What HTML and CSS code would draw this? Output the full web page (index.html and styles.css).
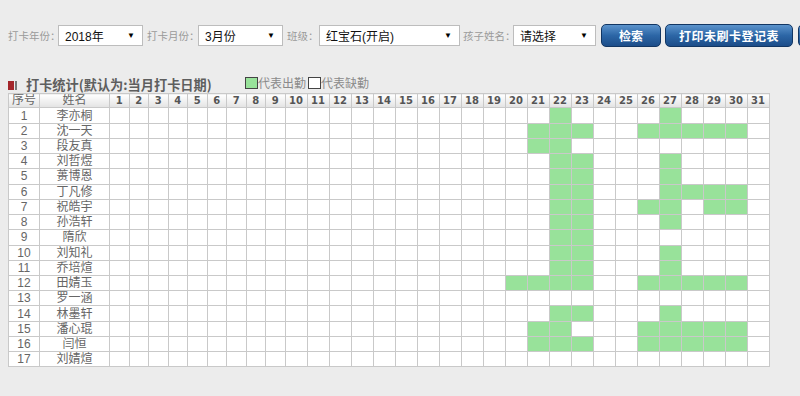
FILE: index.html
```html
<!DOCTYPE html>
<html lang="zh-CN">
<head>
<meta charset="utf-8">
<title>打卡统计</title>
<link rel="stylesheet" href="styles.css">
</head>
<body>
<div class="page">
  <div class="toolbar">
    <span class="label l1">打卡年份：</span>
    <div class="select s1"><span>2018年</span><i>▼</i></div>
    <span class="label l2">打卡月份：</span>
    <div class="select s2"><span>3月份</span><i>▼</i></div>
    <span class="label l3">班级：</span>
    <div class="select s3"><span>红宝石(开启)</span><i>▼</i></div>
    <span class="label l4">孩子姓名：</span>
    <div class="select s4"><span>请选择</span><i>▼</i></div>
    <button class="btn b1">检索</button>
    <button class="btn b2">打印未刷卡登记表</button>
    <button class="btn b3" aria-label="导出"></button>
  </div>

  <div class="title-bar">
    <span class="mark"><i class="red"></i><i class="gray"></i></span>
    <h2 class="title">打卡统计(默认为:当月打卡日期)</h2>
    <span class="legend"><i class="box on"></i><span class="lt">代表出勤</span><i class="box"></i><span class="lt">代表缺勤</span></span>
  </div>

  <table class="grid">
    <colgroup>
      <col class="c-no"><col class="c-name">
      <col class="c-s"><col class="c-s"><col class="c-s"><col class="c-s"><col class="c-s"><col class="c-s"><col class="c-s"><col class="c-s"><col class="c-s">
      <col class="c-w"><col class="c-w"><col class="c-w"><col class="c-w"><col class="c-w"><col class="c-w"><col class="c-w"><col class="c-w"><col class="c-w"><col class="c-w"><col class="c-w"><col class="c-w"><col class="c-w"><col class="c-w"><col class="c-w"><col class="c-w"><col class="c-w"><col class="c-w"><col class="c-w"><col class="c-w"><col class="c-w"><col class="c-w">
    </colgroup>
    <thead>
      <tr>
        <th>序号</th><th>姓名</th>
        <th class="d">1</th><th class="d">2</th><th class="d">3</th><th class="d">4</th><th class="d">5</th><th class="d">6</th><th class="d">7</th><th class="d">8</th><th class="d">9</th><th class="d">10</th>
        <th class="d">11</th><th class="d">12</th><th class="d">13</th><th class="d">14</th><th class="d">15</th><th class="d">16</th><th class="d">17</th><th class="d">18</th><th class="d">19</th><th class="d">20</th>
        <th class="d">21</th><th class="d">22</th><th class="d">23</th><th class="d">24</th><th class="d">25</th><th class="d">26</th><th class="d">27</th><th class="d">28</th><th class="d">29</th><th class="d">30</th><th class="d">31</th>
      </tr>
    </thead>
    <tbody>
      <tr><td>1</td><td>李亦桐</td>
        <td></td><td></td><td></td><td></td><td></td><td></td><td></td><td></td><td></td><td></td><td></td><td></td><td></td><td></td><td></td><td></td><td></td><td></td><td></td>
        <td></td><td></td><td class="on"></td><td></td><td></td><td></td><td></td><td class="on"></td><td></td><td></td><td></td><td></td></tr>
      <tr><td>2</td><td>沈一天</td>
        <td></td><td></td><td></td><td></td><td></td><td></td><td></td><td></td><td></td><td></td><td></td><td></td><td></td><td></td><td></td><td></td><td></td><td></td><td></td>
        <td></td><td class="on"></td><td class="on"></td><td class="on"></td><td></td><td></td><td class="on"></td><td class="on"></td><td class="on"></td><td class="on"></td><td class="on"></td><td></td></tr>
      <tr><td>3</td><td>段友真</td>
        <td></td><td></td><td></td><td></td><td></td><td></td><td></td><td></td><td></td><td></td><td></td><td></td><td></td><td></td><td></td><td></td><td></td><td></td><td></td>
        <td></td><td class="on"></td><td class="on"></td><td></td><td></td><td></td><td></td><td></td><td></td><td></td><td></td><td></td></tr>
      <tr><td>4</td><td>刘哲煜</td>
        <td></td><td></td><td></td><td></td><td></td><td></td><td></td><td></td><td></td><td></td><td></td><td></td><td></td><td></td><td></td><td></td><td></td><td></td><td></td>
        <td></td><td></td><td class="on"></td><td class="on"></td><td></td><td></td><td></td><td class="on"></td><td></td><td></td><td></td><td></td></tr>
      <tr><td>5</td><td>蒉博恩</td>
        <td></td><td></td><td></td><td></td><td></td><td></td><td></td><td></td><td></td><td></td><td></td><td></td><td></td><td></td><td></td><td></td><td></td><td></td><td></td>
        <td></td><td></td><td class="on"></td><td class="on"></td><td></td><td></td><td></td><td class="on"></td><td></td><td></td><td></td><td></td></tr>
      <tr><td>6</td><td>丁凡修</td>
        <td></td><td></td><td></td><td></td><td></td><td></td><td></td><td></td><td></td><td></td><td></td><td></td><td></td><td></td><td></td><td></td><td></td><td></td><td></td>
        <td></td><td></td><td class="on"></td><td class="on"></td><td></td><td></td><td></td><td class="on"></td><td class="on"></td><td class="on"></td><td class="on"></td><td></td></tr>
      <tr><td>7</td><td>祝皓宇</td>
        <td></td><td></td><td></td><td></td><td></td><td></td><td></td><td></td><td></td><td></td><td></td><td></td><td></td><td></td><td></td><td></td><td></td><td></td><td></td>
        <td></td><td></td><td class="on"></td><td class="on"></td><td></td><td></td><td class="on"></td><td class="on"></td><td></td><td class="on"></td><td class="on"></td><td></td></tr>
      <tr><td>8</td><td>孙浩轩</td>
        <td></td><td></td><td></td><td></td><td></td><td></td><td></td><td></td><td></td><td></td><td></td><td></td><td></td><td></td><td></td><td></td><td></td><td></td><td></td>
        <td></td><td></td><td class="on"></td><td class="on"></td><td></td><td></td><td></td><td class="on"></td><td></td><td></td><td></td><td></td></tr>
      <tr><td>9</td><td>隋欣</td>
        <td></td><td></td><td></td><td></td><td></td><td></td><td></td><td></td><td></td><td></td><td></td><td></td><td></td><td></td><td></td><td></td><td></td><td></td><td></td>
        <td></td><td></td><td class="on"></td><td class="on"></td><td></td><td></td><td></td><td></td><td></td><td></td><td></td><td></td></tr>
      <tr><td>10</td><td>刘知礼</td>
        <td></td><td></td><td></td><td></td><td></td><td></td><td></td><td></td><td></td><td></td><td></td><td></td><td></td><td></td><td></td><td></td><td></td><td></td><td></td>
        <td></td><td></td><td class="on"></td><td class="on"></td><td></td><td></td><td></td><td class="on"></td><td></td><td></td><td></td><td></td></tr>
      <tr><td>11</td><td>乔培煊</td>
        <td></td><td></td><td></td><td></td><td></td><td></td><td></td><td></td><td></td><td></td><td></td><td></td><td></td><td></td><td></td><td></td><td></td><td></td><td></td>
        <td></td><td></td><td class="on"></td><td class="on"></td><td></td><td></td><td></td><td class="on"></td><td></td><td></td><td></td><td></td></tr>
      <tr><td>12</td><td>田婧玉</td>
        <td></td><td></td><td></td><td></td><td></td><td></td><td></td><td></td><td></td><td></td><td></td><td></td><td></td><td></td><td></td><td></td><td></td><td></td><td></td>
        <td class="on"></td><td class="on"></td><td class="on"></td><td class="on"></td><td></td><td></td><td class="on"></td><td class="on"></td><td class="on"></td><td class="on"></td><td class="on"></td><td></td></tr>
      <tr><td>13</td><td>罗一涵</td>
        <td></td><td></td><td></td><td></td><td></td><td></td><td></td><td></td><td></td><td></td><td></td><td></td><td></td><td></td><td></td><td></td><td></td><td></td><td></td>
        <td></td><td></td><td></td><td></td><td></td><td></td><td></td><td></td><td></td><td></td><td></td><td></td></tr>
      <tr><td>14</td><td>林墨轩</td>
        <td></td><td></td><td></td><td></td><td></td><td></td><td></td><td></td><td></td><td></td><td></td><td></td><td></td><td></td><td></td><td></td><td></td><td></td><td></td>
        <td></td><td></td><td class="on"></td><td class="on"></td><td></td><td></td><td></td><td class="on"></td><td></td><td></td><td></td><td></td></tr>
      <tr><td>15</td><td>潘心琨</td>
        <td></td><td></td><td></td><td></td><td></td><td></td><td></td><td></td><td></td><td></td><td></td><td></td><td></td><td></td><td></td><td></td><td></td><td></td><td></td>
        <td></td><td class="on"></td><td class="on"></td><td></td><td></td><td></td><td class="on"></td><td class="on"></td><td class="on"></td><td class="on"></td><td class="on"></td><td></td></tr>
      <tr><td>16</td><td>闫恒</td>
        <td></td><td></td><td></td><td></td><td></td><td></td><td></td><td></td><td></td><td></td><td></td><td></td><td></td><td></td><td></td><td></td><td></td><td></td><td></td>
        <td></td><td class="on"></td><td class="on"></td><td class="on"></td><td></td><td></td><td class="on"></td><td class="on"></td><td class="on"></td><td class="on"></td><td class="on"></td><td></td></tr>
      <tr><td>17</td><td>刘婧煊</td>
        <td></td><td></td><td></td><td></td><td></td><td></td><td></td><td></td><td></td><td></td><td></td><td></td><td></td><td></td><td></td><td></td><td></td><td></td><td></td>
        <td></td><td></td><td></td><td></td><td></td><td></td><td></td><td></td><td></td><td></td><td></td><td></td></tr>
    </tbody>
  </table>
</div>
</body>
</html>
```

FILE: styles.css
```css
html, body {
  margin: 0;
  padding: 0;
}

body {
  background: #ececec;
  width: 800px;
  height: 396px;
  overflow: hidden;
  font-family: "Liberation Sans", "Noto Sans CJK SC", sans-serif;
  color: #666;
}

.page {
  padding: 0 8px;
}

/* toolbar */
.toolbar {
  display: flex;
  align-items: center;
  height: 24px;
  margin-top: 23px;
  white-space: nowrap;
}

.label {
  flex: none;
  box-sizing: border-box;
  font-size: 10.5px;
  color: #9a9a9a;
}

.l1 { width: 50px; }
.l2 { width: 55px; padding-left: 4px; }
.l3 { width: 36px; padding-left: 4px; }
.l4 { width: 53px; padding-left: 3px; }

.select {
  flex: none;
  box-sizing: border-box;
  height: 21px;
  background: #fff;
  border: 1px solid #bdbdbd;
  display: flex;
  align-items: center;
  justify-content: space-between;
  padding: 0 7px 0 6px;
  font-size: 12px;
  color: #111;
}

.select i {
  font-style: normal;
  font-size: 8px;
  color: #000;
}

.s1, .s2 { width: 85px; }
.s3 { width: 141px; }
.s4 { width: 83px; }

.btn {
  flex: none;
  box-sizing: border-box;
  height: 23px;
  padding: 0;
  border: 1px solid #123663;
  border-radius: 5px;
  background: linear-gradient(#5b93cc, #2c66a6 50%, #1c4d89);
  color: #fff;
  font: bold 12px "Noto Sans CJK SC", sans-serif;
}

.b1 { width: 60px; margin-left: 5px; }
.b2 { width: 128px; margin-left: 4px; letter-spacing: 0.5px; }
.b3 { width: 60px; margin-left: 5px; }

/* title */
.title-bar {
  display: flex;
  align-items: center;
  height: 18px;
  margin-top: 28px;
}

.mark {
  flex: none;
  width: 18px;
  display: flex;
  align-items: center;
  gap: 1px;
  margin-top: 2px;
}

.mark i {
  display: block;
  height: 9px;
}

.mark .red { width: 6px; background: #a3262a; }
.mark .gray { width: 2px; background: #777; }

.title {
  flex: none;
  margin: 0;
  width: 219px;
  font-family: "Noto Sans CJK SC", sans-serif;
  font-size: 13.2px;
  font-weight: bold;
  line-height: 18px;
  color: #5e5e5e;
  white-space: nowrap;
  padding-top: 2px;
}

.legend {
  display: flex;
  align-items: center;
  align-self: flex-start;
  margin-top: -1px;
  font-size: 12px;
  color: #8a8a8a;
}

.box {
  display: block;
  box-sizing: border-box;
  width: 13px;
  height: 12px;
  border: 1px solid #444;
  background: #fff;
}

.box.on { background: #98e29a; }
.lt { margin-right: 2px; }

/* table */
.grid {
  border-collapse: collapse;
  table-layout: fixed;
  width: 761px;
  background: #fff;
  font-size: 12px;
  color: #666;
}

.c-no { width: 31px; }
.c-name { width: 70px; }
.c-s { width: 19.5px; }
.c-w { width: 22px; }

.grid th, .grid td {
  border: 1px solid #c9c9c9;
  padding: 0;
  height: 14.24px;
  line-height: 14px;
  text-align: center;
  white-space: nowrap;
  overflow: hidden;
}

.grid th {
  height: 13.4px;
  line-height: 13px;
  background: linear-gradient(#ffffff, #e3e3e3);
  font-weight: normal;
  color: #666;
}

.grid th.d {
  font: bold 10px/13px "DejaVu Sans", sans-serif;
  color: #555;
}

.grid td.on {
  background: #98e29a;
}
```
